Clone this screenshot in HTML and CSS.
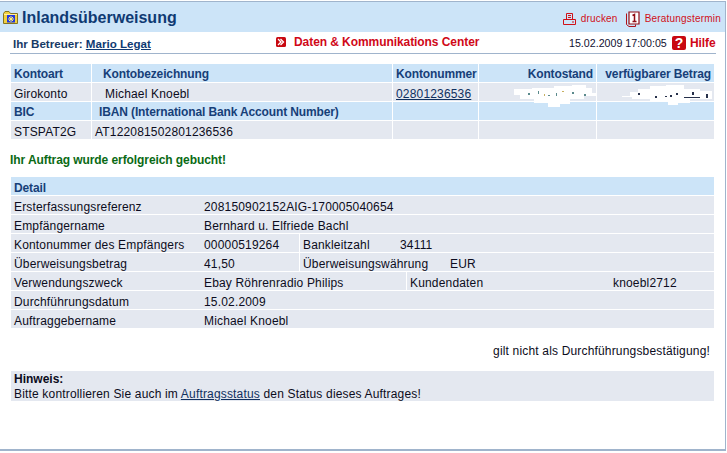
FILE: index.html
```html
<!DOCTYPE html>
<html lang="de">
<head>
<meta charset="utf-8">
<title>Inlandsüberweisung</title>
<link rel="stylesheet" href="styles.css">
</head>
<body>
<div class="frame">
  <header class="titlebar">
    <div class="title">
      <svg class="folder" width="15" height="13" viewBox="0 0 15 13">
        <path d="M.5 2.500V12.500H14.500V2.500H7.500L6 .5H2Z" fill="#f0d040" stroke="#857420"/>
        <path d="M1 3H14V4H1Z" fill="#fff0a0"/>
        <rect x="4" y="4" width="8" height="7.500" fill="#2038e0"/>
        <path d="M8 5V11M5 8H11M6 6L10 10M10 6L6 10" stroke="#fff070" stroke-width="1"/>
      </svg>
      <h1>Inlandsüberweisung</h1>
    </div>
    <nav class="tools">
      <a class="tool">
        <svg width="13" height="12" viewBox="0 0 13 12" fill="none" stroke="#d01018"><path d="M3.500 6.500V.5H9.500V6.500M5 2.500H8M5 4.500H8"/><path d="M.5 6.500H12.500V11.500H.5Z"/><path d="M9 9H11"/></svg>
        <span>drucken</span>
      </a>
      <a class="tool tool-wide">
        <svg width="14" height="16" viewBox="0 0 14 16" fill="none" stroke="#b01018"><path d="M.5 2.500V13.500L3 15.500H9.500V13.500"/><path d="M3 1H13V13H3Z" fill="#fff" stroke="#900c14" stroke-width="1.200"/><path d="M6.500 4.500L8.500 3.500V10.500M6.500 10.500H10.500" stroke="#900c14" stroke-width="1.500"/></svg>
        <span>Beratungstermin</span>
      </a>
    </nav>
  </header>

  <div class="subbar">
    <div class="advisor">Ihr Betreuer: <a class="link-strong">Mario Legat</a></div>
    <a class="center-link">
      <span class="bullet"><svg width="10" height="10" viewBox="0 0 10 10"><rect width="10" height="10" rx="1.500" fill="#c80810"/><path d="M2 2L5 5L2 8M4.500 2L7.500 5L4.500 8" fill="none" stroke="#fff" stroke-width="1.300"/></svg></span>
      Daten &amp; Kommunikations Center
    </a>
    <div class="stamp">15.02.2009 17:00:05</div>
    <a class="help">
      <span class="help-icon">?</span>
      <span>Hilfe</span>
    </a>
  </div>

  <section class="accounts">
    <div class="c head">Kontoart</div>
    <div class="c head pad-11">Kontobezeichnung</div>
    <div class="c head">Kontonummer</div>
    <div class="c head right">Kontostand</div>
    <div class="c head right">verfügbarer Betrag</div>

    <div class="c">Girokonto</div>
    <div class="c pad-13">Michael Knoebl</div>
    <div class="c"><a class="link">02801236536</a></div>
    <div class="c smudged">
      <svg class="smudge smudge-a" width="90" height="22" viewBox="0 0 90 22" fill="#fff"><path d="M0 4H18V3H40V1H58V0H72V3H78V8H90V11H70V14H56V19H46V22H34V18H20V14H6V10H0Z"/><path d="M14 8h2v2h-2zM24 6h1v3h-1zM34 10h2v1h-2zM42 8h1v3h-1zM58 7h2v2h-2zM70 9h2v2h-2z" fill="#5b8a8c"/><path d="M30 9h1v2h-1zM48 6h2v1h-2z" fill="#c8b060"/></svg>
    </div>
    <div class="c smudged">
      <svg class="smudge smudge-b" width="90" height="20" viewBox="0 0 90 20" fill="#fff"><path d="M0 11H8V7H16V4H28V1H44V0H62V4H78V6H90V14H68V18H56V20H46V17H28V14H10V12H0Z"/><path d="M16 8h2v2h-2zM33 11h2v2h-2zM43 11h2v1h-2zM48 10h2v2h-2zM54 8h2v2h-2zM62 12h16v1H62zM70 7h2v3h-2zM84 9h2v4h-2z" fill="#26304a"/></svg>
    </div>

    <div class="c head">BIC</div>
    <div class="c head pad-7">IBAN (International Bank Account Number)</div>
    <div class="c head"></div>
    <div class="c head"></div>
    <div class="c head"></div>

    <div class="c">STSPAT2G</div>
    <div class="c">AT122081502801236536</div>
    <div class="c"></div>
    <div class="c"></div>
    <div class="c"></div>
  </section>

  <p class="success">Ihr Auftrag wurde erfolgreich gebucht!</p>

  <section class="details">
    <div class="row"><div class="cell head grow">Detail</div></div>
    <div class="row"><div class="cell grow"><span class="lab">Ersterfassungsreferenz</span>208150902152AIG-170005040654</div></div>
    <div class="row"><div class="cell grow"><span class="lab">Empfängername</span>Bernhard u. Elfriede Bachl</div></div>
    <div class="row">
      <div class="cell part-a"><span class="lab">Kontonummer des Empfängers</span>00000519264</div>
      <div class="cell grow"><span class="lab-blz">Bankleitzahl</span>34111</div>
    </div>
    <div class="row">
      <div class="cell part-a"><span class="lab">Überweisungsbetrag</span>41,50</div>
      <div class="cell grow"><span class="lab-cur">Überweisungswährung</span>EUR</div>
    </div>
    <div class="row">
      <div class="cell part-b"><span class="lab">Verwendungszweck</span>Ebay Röhrenradio Philips</div>
      <div class="cell grow"><span class="lab-cust">Kundendaten</span>knoebl2712</div>
    </div>
    <div class="row"><div class="cell grow"><span class="lab">Durchführungsdatum</span>15.02.2009</div></div>
    <div class="row"><div class="cell grow"><span class="lab">Auftraggebername</span>Michael Knoebl</div></div>
  </section>

  <p class="disclaimer">gilt nicht als Durchführungsbestätigung!</p>

  <section class="notice">
    <strong>Hinweis:</strong><br>
    Bitte kontrollieren Sie auch im <a class="link">Auftragsstatus</a> den Status dieses Auftrages!
  </section>
</div>
</body>
</html>
```
FILE: styles.css
```css
* { box-sizing: border-box; }
html, body { margin: 0; padding: 0; background: #fff; }
body {
  padding-top: 1px;
  font-family: "Liberation Sans", Arial, sans-serif;
  font-size: 12px;
  letter-spacing: .17px;
  color: #0c0c20;
  overflow: hidden;
}
a { cursor: pointer; }
.frame {
  width: 726px;
  height: 450px;
  border-top: 1px solid #a0b4cc;
  border-right: 1px solid #a0b4cc;
  border-bottom: 2px solid #a0b4cc;
}
.titlebar {
  height: 30px;
  background: #cce4f8;
  display: flex;
  justify-content: space-between;
  align-items: center;
  padding: 0 4px 0 3px;
}
.title { display: flex; align-items: center; gap: 4px; }
.folder { display: block; }
h1 { margin: 1px 0 0; font-size: 16px; font-weight: bold; letter-spacing: 0; color: #0f3a73; line-height: 20px; }
.tools { display: flex; align-items: center; }
.tool { display: flex; align-items: center; gap: 5px; font-size: 10px; letter-spacing: .2px; color: #d01018; margin-top: 3px; }
.tool-wide { margin-left: 8px; }
.tool svg { display: block; }
.subbar {
  height: 22px;
  margin: 0 9px 0 10px;
  border-bottom: 1px solid #a0b4cc;
  display: flex;
  align-items: center;
  font-size: 10.67px;
  letter-spacing: 0;
  padding-left: 3px;
}
.advisor { width: 263px; font-size: 11.6px; font-weight: bold; color: #173a66; margin-top: 1px; }
.link-strong { color: #0f3a73; text-decoration: underline; }
.center-link { display: flex; align-items: center; width: 293px; font-size: 12px; font-weight: bold; letter-spacing: -.07px; color: #d00818; margin-top: -2px; }
.bullet { display: block; width: 18px; height: 10px; }
.bullet svg { display: block; }
.stamp { width: 103px; color: #101030; margin-top: 1px; }
.help { display: flex; align-items: center; gap: 4px; font-size: 12px; font-weight: bold; color: #d00818; letter-spacing: -.1px; }
.help-icon {
  display: block;
  width: 14px;
  height: 14px;
  border-radius: 2px;
  background: #c80810;
  color: #fff;
  font-size: 14px;
  line-height: 14px;
  text-align: center;
}
.accounts {
  margin: 10px 0 0 11px;
  width: 703px;
  display: grid;
  grid-template-columns: 80px 300px 85px 117px 117px;
  grid-auto-rows: 18px;
  gap: 1px;
}
.c {
  background: #e4e8f0;
  padding: 2px 3px 0;
  line-height: 18px;
  white-space: nowrap;
}
.c.head { padding-top: 1px; }
.head { background: #cce4f8; font-weight: bold; letter-spacing: -.13px; color: #173f78; }
.c.right { text-align: right; padding-right: 3px; }
.c.pad-11 { padding-left: 11px; }
.c.pad-13 { padding-left: 13px; }
.c.pad-7 { padding-left: 7px; }
.link { color: #10305f; text-decoration: underline; }
.smudged { position: relative; }
.smudge { position: absolute; top: 2px; }
.smudge-a { left: 35px; }
.smudge-b { left: 25px; }
.success {
  margin: 14px 0 0 10px;
  line-height: 15px;
  font-weight: bold;
  letter-spacing: -.08px;
  color: #0a6a14;
}
.details { margin: 9px 0 0 11px; width: 703px; display: flex; flex-direction: column; gap: 1px; }
.row { display: flex; gap: 1px; height: 18px; }
.cell { background: #e4e8f0; line-height: 18px; padding: 2px 0 0 3px; white-space: nowrap; }
.cell.head { background: #cce4f8; }
.grow { flex: 1; }
.part-a { width: 288px; }
.part-b { width: 395px; }
.lab { display: inline-block; width: 190px; }
.lab-blz { display: inline-block; width: 97px; }
.lab-cur { display: inline-block; width: 147px; }
.lab-cust { display: inline-block; width: 203px; }
.disclaimer { margin: 16px 15px 0 0; line-height: 15px; text-align: right; }
.notice {
  margin: 12px 0 0 11px;
  width: 703px;
  height: 30px;
  background: #e4e8f0;
  padding: 1px 0 0 3px;
  line-height: 15px;
}
.notice strong { letter-spacing: 0; }
```
